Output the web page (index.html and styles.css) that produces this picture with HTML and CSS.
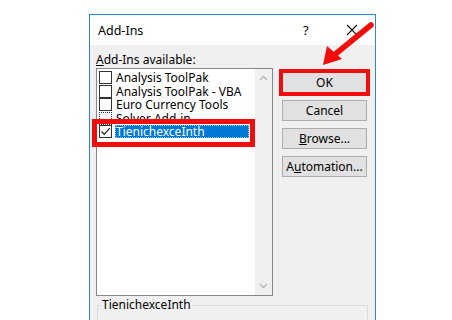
FILE: index.html
```html
<!DOCTYPE html>
<html lang="en">
<head>
    <meta charset="UTF-8">
    <title>Add-Ins</title>
    <link rel="stylesheet" href="styles.css">
</head>
<body>
    <div class="dialog">
        <div class="titlebar">
            <span class="title">Add-Ins</span>
            <span class="help">?</span>
            <span class="close">
                <svg width="12" height="12" viewBox="0 0 12 12"><path d="M1 1 L11 11 M11 1 L1 11" stroke="#111" stroke-width="1.1" fill="none"/></svg>
            </span>
        </div>

        <div class="content">
            <div class="left">
                <div class="label"><u>A</u>dd-Ins available:</div>
                <div class="listbox">
                    <div class="items">
                        <div class="item"><span class="check"></span><span class="name">Analysis ToolPak</span></div>
                        <div class="item"><span class="check"></span><span class="name">Analysis ToolPak - VBA</span></div>
                        <div class="item"><span class="check"></span><span class="name">Euro Currency Tools</span></div>
                        <div class="item"><span class="check focus"></span><span class="name">Solver Add-in</span></div>
                        <div class="item selected"><span class="check checked">
                            <svg width="11" height="11" viewBox="0 0 11 11"><path d="M1.5 5.5 L4.2 8.3 L9.8 2.2" stroke="#222" stroke-width="1.2" fill="none"/></svg>
                        </span><span class="name">TienichexceInth</span></div>
                    </div>
                    <div class="scrollbar">
                        <svg width="9" height="6" viewBox="0 0 9 6"><path d="M1 5 L4.5 1.5 L8 5" stroke="#b4b4b4" stroke-width="1.3" fill="none"/></svg>
                        <svg width="9" height="6" viewBox="0 0 9 6"><path d="M1 1 L4.5 4.5 L8 1" stroke="#b4b4b4" stroke-width="1.3" fill="none"/></svg>
                    </div>
                </div>
            </div>

            <div class="buttons">
                <button class="btn marked">OK</button>
                <button class="btn">Cancel</button>
                <button class="btn"><u>B</u>rowse...</button>
                <button class="btn">A<u>u</u>tomation...</button>
            </div>
        </div>

        <div class="groupbox">
            <span class="legend">TienichexceInth</span>
        </div>

        <div class="mark-item"></div>
    </div>

    <svg class="arrow" width="452" height="320" viewBox="0 0 452 320">
        <path d="M371 25 L333 56" stroke="#f20d0d" stroke-width="5.5" stroke-linecap="round" fill="none"/>
        <path d="M323 65 L327 46 L342 59 Z" fill="#f20d0d"/>
    </svg>
</body>
</html>
```

FILE: styles.css
```css
* {
    margin: 0;
    padding: 0;
    box-sizing: border-box;
}

body {
    background-color: #fff;
    font-family: 'Noto Sans', 'Open Sans', sans-serif;
    font-size: 12px;
    color: #000;
    width: 452px;
    height: 320px;
    overflow: hidden;
    position: relative;
}

.dialog {
    position: relative;
    margin: 14px 0 0 89px;
    width: 287px;
    height: 320px;
    background-color: #f0f0f0;
    border: 1px solid #2b86d4;
    border-bottom: none;
}

.titlebar {
    height: 30px;
    background-color: #fff;
    display: flex;
    align-items: center;
    padding-left: 8px;
}

.title {
    flex: 1;
    font-size: 12.5px;
}

.help {
    font-size: 13px;
    width: 38px;
}

.close {
    width: 34px;
    display: flex;
    align-items: center;
    padding-left: 5px;
}

.content {
    display: flex;
    padding: 7px 0 0 6px;
}

.left {
    width: 177px;
}

.label {
    height: 16px;
    line-height: 16px;
}

.listbox {
    height: 228px;
    border: 1px solid #828790;
    background-color: #fff;
    display: flex;
}

.items {
    flex: 1;
    padding: 2px 0 0 2px;
}

.item {
    height: 13.5px;
    display: flex;
    align-items: center;
    overflow: hidden;
}

.check {
    width: 13px;
    height: 13px;
    border: 1px solid #333;
    background-color: #fff;
    display: flex;
    align-items: center;
    justify-content: center;
    flex-shrink: 0;
}

.check.focus {
    border-style: dotted;
}

.name {
    margin-left: 3px;
    line-height: 13px;
    padding: 0 2px 0 1px;
    white-space: nowrap;
}

.item.selected .name {
    background-color: #0078d7;
    color: #fff;
    width: 134px;
    outline: 1px dotted #9bc8ee;
    outline-offset: -1px;
}

.scrollbar {
    width: 17px;
    background-color: #f0f0f0;
    display: flex;
    flex-direction: column;
    justify-content: space-between;
    align-items: center;
    padding: 6px 0 6px;
}

.buttons {
    margin-left: 9px;
    display: flex;
    flex-direction: column;
    gap: 7px;
    padding-top: 20px;
}

.btn {
    width: 85px;
    height: 21px;
    font-family: inherit;
    font-size: 12px;
    background-color: #e1e1e1;
    border: 1px solid #adadad;
    color: #000;
}

.btn.marked {
    outline: 4px solid #f20d0d;
    outline-offset: -1px;
}

.groupbox {
    margin: 9px 0 0 7px;
    width: 271px;
    height: 30px;
    border: 1px solid #dcdcdc;
    border-bottom: none;
}

.legend {
    display: inline-block;
    margin: -9px 0 0 3px;
    padding: 0 1px;
    background-color: #f0f0f0;
    line-height: 16px;
    vertical-align: top;
}

.mark-item {
    position: absolute;
    left: 2px;
    top: 104px;
    width: 163px;
    height: 28px;
    border: 5px solid #f20d0d;
}

.arrow {
    position: absolute;
    left: 0;
    top: 0;
}
```
